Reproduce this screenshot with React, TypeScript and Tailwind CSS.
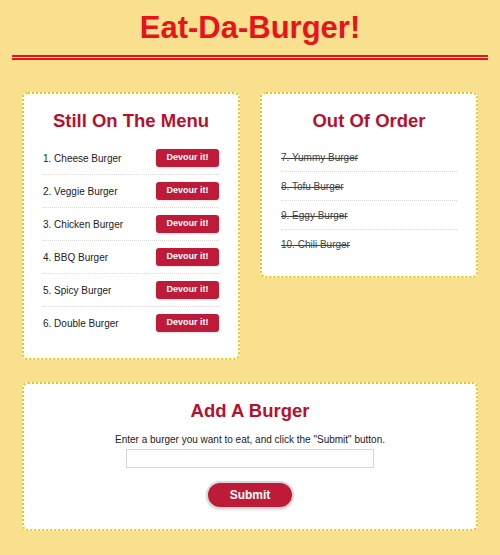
const menu = [
  "1. Cheese Burger",
  "2. Veggie Burger",
  "3. Chicken Burger",
  "4. BBQ Burger",
  "5. Spicy Burger",
  "6. Double Burger",
];

const eaten = ["7. Yummy Burger", "8. Tofu Burger", "9. Eggy Burger", "10. Chili Burger"];

const App = () => {
  return (
    <div className="min-h-[555px] bg-[#f8e08e] font-['Liberation_Sans',Arial,sans-serif] text-[#222]">
      <h1 className="pt-[11px] text-center text-[31px] font-bold leading-[34px] text-[#e8141c]">
        Eat-Da-Burger!
      </h1>
      <div className="mx-3 mt-[10px] h-[5px] border-y-2 border-[#e8141c] bg-[#f9ea9c]" />

      <div className="px-[22px] pt-[32px] pb-[24px]">
        <div className="flex items-start gap-5">
          <div className="w-[218px] rounded-md border-2 border-dotted border-[#f5c400] bg-white px-[19px] pt-[15px] pb-[19px]">
            <h2 className="text-center text-[18.5px] font-bold leading-6 text-[#b8102c]">
              Still On The Menu
            </h2>
            <ul className="mt-[9px]">
              {menu.map((item, i) => (
                <li
                  key={item}
                  className={
                    i < menu.length - 1
                      ? "flex h-[33px] items-center justify-between border-b border-dotted border-[#d8d8d8]"
                      : "flex h-[32px] items-center justify-between"
                  }
                >
                  <span className="text-[10px]">{item}</span>
                  <button className="h-[18px] w-[63px] rounded-[3px] bg-[#bd1b38] text-[9px] font-bold text-white shadow-sm">
                    Devour it!
                  </button>
                </li>
              ))}
            </ul>
          </div>

          <div className="w-[218px] rounded-md border-2 border-dotted border-[#f5c400] bg-white px-[19px] pt-[15px] pb-[18px]">
            <h2 className="text-center text-[18.5px] font-bold leading-6 text-[#b8102c]">
              Out Of Order
            </h2>
            <ul className="mt-[10px]">
              {eaten.map((item, i) => (
                <li
                  key={item}
                  className={
                    i < eaten.length - 1
                      ? "flex h-[29px] items-center border-b border-dotted border-[#d8d8d8]"
                      : "flex h-[28px] items-center"
                  }
                >
                  <span className="text-[10px] text-[#444] line-through">{item}</span>
                </li>
              ))}
            </ul>
          </div>
        </div>

        <div className="mt-[22px] flex flex-col items-center rounded-md border-2 border-dotted border-[#f5c400] bg-white pt-[15px] pb-[20px]">
          <h2 className="text-center text-[18.5px] font-bold leading-6 text-[#b8102c]">
            Add A Burger
          </h2>
          <p className="mt-[10px] text-[10px] leading-[14px]">
            Enter a burger you want to eat, and click the "Submit" button.
          </p>
          <input
            type="text"
            className="mt-[2px] h-[19px] w-[248px] border border-[#d6d6d6] bg-white outline-none"
          />
          <button className="mt-[13px] h-[28px] w-[88px] rounded-full border-2 border-[#d9d9d9] bg-[#bd1b38] text-[12px] font-bold text-white shadow-sm">
            Submit
          </button>
        </div>
      </div>
    </div>
  );
};

export default App;
